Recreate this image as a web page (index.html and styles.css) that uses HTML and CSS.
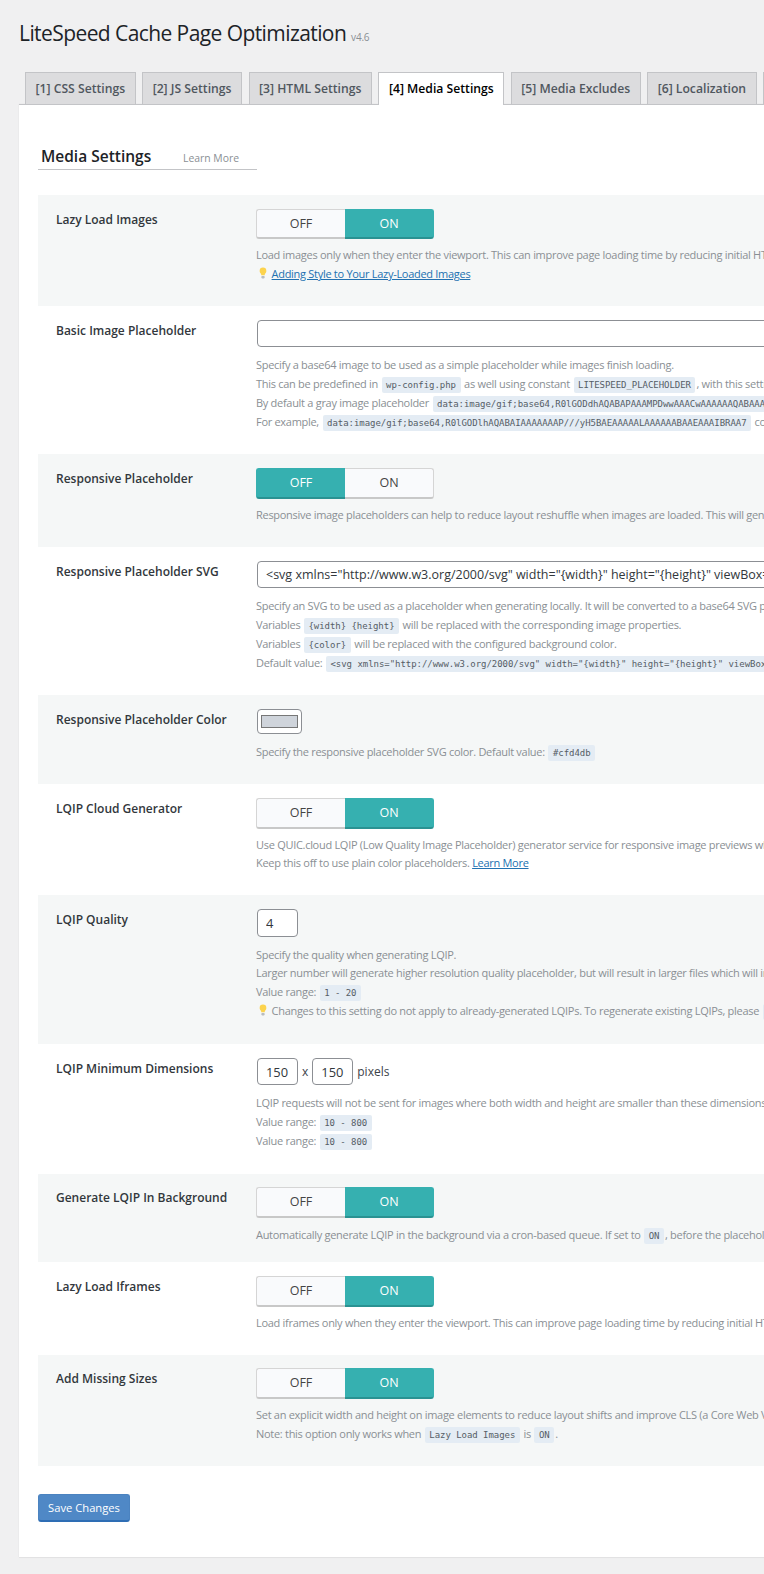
FILE: index.html
```html
<!DOCTYPE html>
<html lang="en">
<head>
<meta charset="utf-8">
<title>LiteSpeed Cache Page Optimization</title>
<link rel="stylesheet" href="styles.css">
</head>
<body>
<div class="wrap">
  <h1 class="title">LiteSpeed Cache Page Optimization <span class="version">v4.6</span></h1>
  <nav class="tabs">
    <a class="tab">[1] CSS Settings</a>
    <a class="tab">[2] JS Settings</a>
    <a class="tab">[3] HTML Settings</a>
    <a class="tab active">[4] Media Settings</a>
    <a class="tab">[5] Media Excludes</a>
    <a class="tab">[6] Localization</a>
    <a class="tab">[7] Tuning</a>
  </nav>
  <main class="panel">
    <div class="section-head">
      <h3 class="section-title">Media Settings</h3>
      <a class="learn">Learn More</a>
    </div>

    <section class="row shade">
      <div class="label">Lazy Load Images</div>
      <div class="field">
        <div class="toggle short"><span class="opt">OFF</span><span class="opt on">ON</span></div>
        <p class="line">Load images only when they enter the viewport. This can improve page loading time by reducing initial HTTP requests.</p>
        <p class="line tall"><svg class="bulb" viewBox="0 0 12 14"><path d="M6 .5a4 4 0 0 0-4 4c0 1.600 1 2.500 1.500 3.500.3.600.4 1.200.5 1.800h4c.1-.6.2-1.200.5-1.800C9 7 10 6.100 10 4.500a4 4 0 0 0-4-4z" fill="#fcd34d"/><rect x="4" y="10.500" width="4" height="3" rx="1" fill="#b8bcc0"/></svg> <a class="link">Adding Style to Your Lazy-Loaded Images</a></p>
      </div>
    </section>

    <section class="row">
      <div class="label">Basic Image Placeholder</div>
      <div class="field">
        <input class="text wide" type="text" value="">
        <p class="line">Specify a base64 image to be used as a simple placeholder while images finish loading.</p>
        <p class="line tall">This can be predefined in <code>wp-config.php</code> as well using constant <code>LITESPEED_PLACEHOLDER</code>, with this setting taking priority.</p>
        <p class="line tall">By default a gray image placeholder <code>data:image/gif;base64,R0lGODdhAQABAPAAAMPDwwAAACwAAAAAAQABAAACAkQBADs=</code> will be used.</p>
        <p class="line tall">For example, <code>data:image/gif;base64,R0lGODlhAQABAIAAAAAAAP///yH5BAEAAAAALAAAAAABAAEAAAIBRAA7</code> could be used.</p>
      </div>
    </section>

    <section class="row shade">
      <div class="label">Responsive Placeholder</div>
      <div class="field">
        <div class="toggle"><span class="opt on">OFF</span><span class="opt">ON</span></div>
        <p class="line">Responsive image placeholders can help to reduce layout reshuffle when images are loaded. This will generate the placeholder.</p>
      </div>
    </section>

    <section class="row">
      <div class="label">Responsive Placeholder SVG</div>
      <div class="field">
        <input class="text wide" type="text" value='&lt;svg xmlns="http://www.w3.org/2000/svg" width="{width}" height="{height}" viewBox="0 0 {width} {height}"&gt;'>
        <p class="line">Specify an SVG to be used as a placeholder when generating locally. It will be converted to a base64 SVG placeholder on-the-fly.</p>
        <p class="line tall">Variables <code>{width} {height}</code> will be replaced with the corresponding image properties.</p>
        <p class="line tall">Variables <code>{color}</code> will be replaced with the configured background color.</p>
        <p class="line tall">Default value: <code>&lt;svg xmlns="http://www.w3.org/2000/svg" width="{width}" height="{height}" viewBox="0 0 {width} {height}"&gt;</code></p>
      </div>
    </section>

    <section class="row shade">
      <div class="label">Responsive Placeholder Color</div>
      <div class="field">
        <div class="swatch"><span class="swatch-fill"></span></div>
        <p class="line tall">Specify the responsive placeholder SVG color. Default value: <code>#cfd4db</code></p>
      </div>
    </section>

    <section class="row">
      <div class="label">LQIP Cloud Generator</div>
      <div class="field">
        <div class="toggle"><span class="opt">OFF</span><span class="opt on">ON</span></div>
        <p class="line">Use QUIC.cloud LQIP (Low Quality Image Placeholder) generator service for responsive image previews while loading.</p>
        <p class="line">Keep this off to use plain color placeholders. <a class="link">Learn More</a></p>
      </div>
    </section>

    <section class="row shade extra">
      <div class="label">LQIP Quality</div>
      <div class="field">
        <input class="text small tall-input" type="text" value="4">
        <p class="line">Specify the quality when generating LQIP.</p>
        <p class="line">Larger number will generate higher resolution quality placeholder, but will result in larger files which will increase page size.</p>
        <p class="line tall">Value range: <code>1 - 20</code></p>
        <p class="line tall"><svg class="bulb" viewBox="0 0 12 14"><path d="M6 .5a4 4 0 0 0-4 4c0 1.600 1 2.500 1.500 3.500.3.600.4 1.200.5 1.800h4c.1-.6.2-1.200.5-1.800C9 7 10 6.100 10 4.500a4 4 0 0 0-4-4z" fill="#fcd34d"/><rect x="4" y="10.500" width="4" height="3" rx="1" fill="#b8bcc0"/></svg> Changes to this setting do not apply to already-generated LQIPs. To regenerate existing LQIPs, please <code>Destroy All</code></p>
      </div>
    </section>

    <section class="row extra">
      <div class="label">LQIP Minimum Dimensions</div>
      <div class="field">
        <div class="dims"><input class="text small" type="text" value="150"><span>x</span><input class="text small" type="text" value="150"><span>pixels</span></div>
        <p class="line">LQIP requests will not be sent for images where both width and height are smaller than these dimensions.</p>
        <p class="line tall">Value range: <code>10 - 800</code></p>
        <p class="line tall">Value range: <code>10 - 800</code></p>
      </div>
    </section>

    <section class="row shade tight">
      <div class="label">Generate LQIP In Background</div>
      <div class="field">
        <div class="toggle"><span class="opt">OFF</span><span class="opt on">ON</span></div>
        <p class="line tall">Automatically generate LQIP in the background via a cron-based queue. If set to <code>ON</code>, before the placeholder is localized.</p>
      </div>
    </section>

    <section class="row">
      <div class="label">Lazy Load Iframes</div>
      <div class="field">
        <div class="toggle"><span class="opt">OFF</span><span class="opt on">ON</span></div>
        <p class="line">Load iframes only when they enter the viewport. This can improve page loading time by reducing initial HTTP requests.</p>
      </div>
    </section>

    <section class="row shade tight-top">
      <div class="label">Add Missing Sizes</div>
      <div class="field">
        <div class="toggle"><span class="opt">OFF</span><span class="opt on">ON</span></div>
        <p class="line">Set an explicit width and height on image elements to reduce layout shifts and improve CLS (a Core Web Vitals metric).</p>
        <p class="line tall">Note: this option only works when <code>Lazy Load Images</code> is <code>ON</code>.</p>
      </div>
    </section>

    <button class="save" type="button">Save Changes</button>
  </main>
</div>
</body>
</html>
```
FILE: styles.css
```css
html, body {
  margin: 0;
  padding: 0;
  background: #f0f0f1;
  overflow-x: hidden;
}
body {
  font-family: "Open Sans", sans-serif;
  font-size: 13px;
  color: #3c434a;
}
.wrap {
  width: 764px;
  height: 1574px;
  overflow: hidden;
  padding-left: 19px;
  box-sizing: border-box;
}
.title {
  margin: 0;
  padding-top: 17px;
  height: 72px;
  box-sizing: border-box;
  font-size: 21px;
  letter-spacing: -.58px;
  line-height: 32px;
  font-weight: 400;
  color: #1d2327;
  white-space: nowrap;
}
.version {
  font-size: 10px;
  letter-spacing: -.2px;
  color: #8a8f94;
}
.tabs {
  display: flex;
  gap: 6.500px;
  padding-left: 6px;
  height: 32px;
  white-space: nowrap;
  position: relative;
  z-index: 1;
}
.tab {
  flex: none;
  box-sizing: border-box;
  height: 32px;
  padding: 0 9.500px;
  line-height: 32px;
  font-size: 12.200px;
  font-weight: 600;
  color: #50575e;
  background: #dcdcde;
  border: 1px solid #c3c4c7;
  border-bottom: 0;
}
.tab.active {
  height: 33px;
  background: #fff;
  color: #000;
  border-color: #c3c4c7;
}
.panel {
  width: 1100px;
  box-sizing: border-box;
  height: 1453px;
  background: #fff;
  border-top: 1px solid #c3c4c7;
  box-shadow: 0 1px 1px rgba(0, 0, 0, .04), 0 0 1px rgba(0, 0, 0, .1);
  padding: 0 19px;
}
.section-head {
  display: flex;
  align-items: baseline;
  width: 219px;
  box-sizing: border-box;
  margin-top: 35px;
  height: 30px;
  padding: 5px 0 0 3px;
  border-bottom: 1px solid #c3c4c7;
}
.section-title {
  margin: 0;
  font-size: 15.500px;
  line-height: 22px;
  font-weight: 600;
  color: #1d2327;
  width: 142px;
  flex: none;
}
.learn {
  font-size: 10.400px;
  color: #8a8f94;
}
.row {
  display: flex;
  padding: 14px 0 23px;
  width: 1062px;
}
.row.extra {
  padding-bottom: 24px;
}
.row.tight {
  padding: 13px 0 18px;
}
.row.tight-top {
  padding-top: 13px;
}
.section-head + .row {
  margin-top: 25px;
}
.shade {
  background: #f5f7f7;
}
.label {
  flex: none;
  box-sizing: border-box;
  width: 218px;
  padding-left: 18px;
  font-weight: 600;
  font-size: 12px;
  line-height: 22px;
  color: #32373c;
}
.field {
  flex: 1;
  min-width: 0;
}
.line {
  margin: 0;
  font-size: 11px;
  letter-spacing: -.29px;
  line-height: 18px;
  color: #8a8f94;
  white-space: nowrap;
}
.line.tall {
  line-height: 19px;
}
.link {
  color: #2271b1;
  text-decoration: underline;
}
.bulb {
  width: 10px;
  height: 12px;
  margin: 0 1px 0 2px;
  vertical-align: -1px;
}
code {
  font-family: "DejaVu Sans Mono", monospace;
  font-size: 9px;
  letter-spacing: -.04px;
  line-height: 1;
  color: #555d66;
  background: #e4ecf4;
  border-radius: 2px;
  padding: 3px 4.500px;
  margin: 0 1px;
}
.toggle {
  display: flex;
  width: 178px;
  height: 31px;
  margin-bottom: 7px;
}
.toggle.short {
  height: 30px;
}
.opt {
  flex: 1;
  box-sizing: border-box;
  text-align: center;
  font-size: 12.500px;
  line-height: 27px;
  color: #444;
  background: #f9fafc;
  border: 1px solid #d5d5d5;
  border-bottom: 2px solid #c8c8c8;
}
.opt:first-child {
  border-radius: 3px 0 0 3px;
  border-right: 0;
}
.opt:last-child {
  border-radius: 0 3px 3px 0;
  border-left: 0;
}
.opt.on {
  background: #36b0b0;
  color: #fff;
  border-color: #36b0b0;
  border-bottom-color: #2a9292;
}
.text {
  display: block;
  box-sizing: border-box;
  height: 27px;
  margin: 0 0 9px 1px;
  padding: 0 8px;
  border: 1px solid #8c8f94;
  border-radius: 4px;
  background: #fff;
  font-family: "Open Sans", sans-serif;
  font-size: 12.900px;
  color: #32373c;
}
.text.wide {
  width: 900px;
  font-size: 12.500px;
}
.text.small {
  width: 41px;
}
.text.tall-input {
  height: 28px;
}
.dims {
  display: flex;
  align-items: center;
  gap: 4px;
  height: 27px;
  margin: 0 0 9px 1px;
  font-size: 12px;
  color: #3c434a;
}
.dims .text {
  margin: 0;
}
.swatch {
  box-sizing: border-box;
  width: 45px;
  height: 25px;
  margin: 0 0 8px 1px;
  padding: 5px 3px;
  border: 1px solid #8c8f94;
  border-radius: 4px;
  background: #fff;
  display: flex;
}
.swatch-fill {
  flex: 1;
  background: #cfd4db;
  border: 1px solid #777;
}
.save {
  display: block;
  box-sizing: border-box;
  margin-top: 28px;
  width: 92px;
  height: 28px;
  padding: 0;
  font-family: "Open Sans", sans-serif;
  font-size: 11.200px;
  color: #fff;
  background: #4f88c6;
  border: 1px solid #4b83c0;
  border-bottom: 2px solid #2e6db4;
  border-radius: 3px;
}
```
